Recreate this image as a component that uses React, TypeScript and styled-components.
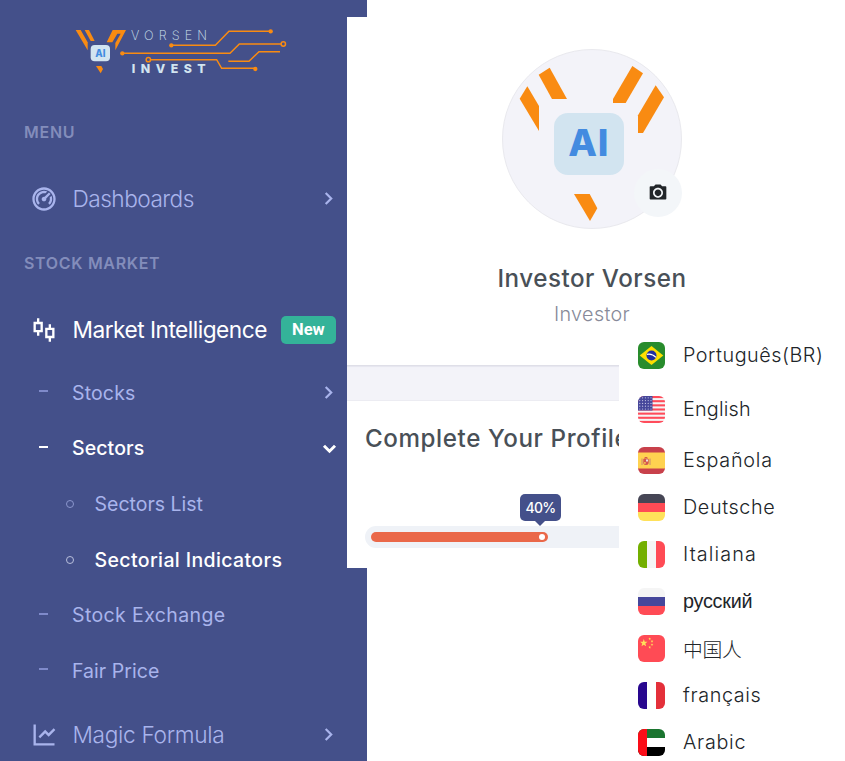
import React from "react";
import styled, { createGlobalStyle } from "styled-components";
import {
  RiDashboard2Line,
  RiStockLine,
  RiLineChartLine,
  RiCameraFill,
} from "react-icons/ri";

const NAVY = "#44508a";
const LILAC = "#a9b4ec";
const ORANGE = "#f98b12";

const GlobalStyle = createGlobalStyle`
  * { box-sizing: border-box; }
  body {
    margin: 0;
    background: #fff;
    font-family: Inter, "Liberation Sans", sans-serif;
    overflow: hidden;
  }
`;

const Page = styled.div`
  position: relative;
  display: flex;
  align-items: flex-start;
  width: 845px;
  height: 761px;
  overflow: hidden;
  background: #fff;
`;

/* ---------- Sidebar ---------- */

const Sidebar = styled.nav`
  flex: none;
  width: 367px;
  height: 761px;
  background: ${NAVY};
`;

const Brand = styled.div`
  height: 99px;
  padding: 15px 0 0 60px;
`;

const SectionTitle = styled.div<{ $height: number; $spacing: number }>`
  display: flex;
  align-items: center;
  height: ${(p) => p.$height}px;
  padding-left: 24px;
  font-size: 16px;
  font-weight: 600;
  letter-spacing: ${(p) => p.$spacing}px;
  color: #838dbb;
`;

const MenuRow = styled.div<{ $height: number; $active?: boolean }>`
  display: flex;
  align-items: center;
  height: ${(p) => p.$height}px;
  padding: 0 26px 0 29.5px;
  color: ${(p) => (p.$active ? "#fff" : LILAC)};
`;

const MenuIcon = styled.span`
  display: flex;
  width: 43px;
`;

const MenuLabel = styled.span<{ $spacing: number; $weight: number }>`
  font-size: 22.7px;
  font-weight: ${(p) => p.$weight};
  letter-spacing: ${(p) => p.$spacing}px;
  white-space: nowrap;
`;

const ArrowIcon = styled.svg<{ $open?: boolean }>`
  flex: none;
  width: 25px;
  height: 25px;
  margin-left: auto;
  fill: none;
  stroke: currentColor;
  stroke-width: ${(p) => (p.$open ? 2.8 : 2.1)};
  transform: ${(p) => (p.$open ? "translateX(1px) rotate(90deg)" : "none")};
`;

const NewBadge = styled.span`
  display: flex;
  align-items: center;
  justify-content: center;
  width: 55px;
  height: 28px;
  margin-left: 14px;
  border-radius: 5px;
  background: #34b399;
  color: #fff;
  font-family: Roboto, sans-serif;
  font-size: 16.5px;
  font-weight: 700;
`;

const SubList = styled.div`
  display: flex;
  flex-direction: column;
`;

const SubRow = styled.div<{ $nested?: boolean; $active?: boolean }>`
  display: flex;
  align-items: center;
  height: 55.6px;
  padding: 0 26px 0 ${(p) => (p.$nested ? 66 : 39)}px;
  color: ${(p) => (p.$active ? "#fff" : LILAC)};
`;

const Dash = styled.span<{ $bright?: boolean }>`
  width: 9px;
  height: 2px;
  margin: -3px 24px 0 0;
  background: ${(p) => (p.$bright ? "#fff" : "#7f8aca")};
`;

const Ring = styled.span<{ $bright?: boolean }>`
  width: 8px;
  height: 8px;
  margin: 0 20.5px 0 0;
  border: 1px solid ${(p) => (p.$bright ? "#b9bfdc" : "#8b96cd")};
  border-radius: 50%;
`;

const SubLabel = styled.span<{ $spacing: number; $weight?: number }>`
  font-size: 19.5px;
  font-weight: ${(p) => p.$weight ?? 400};
  letter-spacing: ${(p) => p.$spacing}px;
  white-space: nowrap;
`;

/* ---------- Profile panel ---------- */

const Panel = styled.main`
  flex: none;
  z-index: 1;
  width: 490px;
  height: 551px;
  margin: 17px 0 0 -20px;
  background: #fff;
`;

const ProfileCard = styled.section`
  display: flex;
  flex-direction: column;
  align-items: center;
  height: 348px;
  padding-top: 32px;
`;

const AvatarFrame = styled.div`
  position: relative;
  width: 180px;
  height: 180px;
  border: 1px solid #e9e9ee;
  border-radius: 50%;
  background: #f3f3f9;
`;

const AvatarArt = styled.svg`
  display: block;
  margin: -1px;
`;

const CameraButton = styled.button`
  position: absolute;
  right: -1px;
  bottom: 11px;
  display: flex;
  align-items: center;
  justify-content: center;
  width: 48px;
  height: 48px;
  padding: 0 0 2px;
  border: 0;
  border-radius: 50%;
  background: #f3f6f9;
  color: #212529;
`;

const Name = styled.h1`
  margin: 35px 0 0;
  font-size: 24.2px;
  line-height: 30px;
  font-weight: 450;
  letter-spacing: 0.5px;
  color: #495057;
`;

const Role = styled.p`
  margin: 7px 0 0;
  font-size: 19.8px;
  line-height: 26px;
  font-weight: 350;
  letter-spacing: 0.35px;
  color: #878a99;
`;

const Gap = styled.div`
  height: 36px;
  border-top: 1px solid #dfdfe8;
  border-bottom: 1px solid #ececf2;
  background: #f3f3f9;
  box-shadow: inset 0 2px 1px -1px #e6e6ef;
`;

const ProgressCard = styled.section`
  padding: 23px 0 0 18px;
`;

const CardTitle = styled.h2`
  margin: 0;
  font-size: 24.2px;
  line-height: 30px;
  font-weight: 450;
  letter-spacing: 0.58px;
  white-space: nowrap;
  color: #495057;
`;

const Track = styled.div`
  position: relative;
  height: 22px;
  margin-top: 72px;
  padding: 6px;
  border-radius: 11px;
  background: #eff2f7;
`;

const Fill = styled.div`
  display: flex;
  align-items: center;
  justify-content: flex-end;
  width: 177px;
  height: 10px;
  padding-right: 3px;
  border-radius: 5px;
  background: #ea6849;
`;

const Knob = styled.span`
  width: 6px;
  height: 6px;
  border-radius: 50%;
  background: #fff;
`;

const Tip = styled.span`
  position: absolute;
  left: 155px;
  bottom: 27px;
  display: flex;
  align-items: center;
  justify-content: center;
  width: 41px;
  height: 27px;
  border-radius: 5px;
  background: ${NAVY};
  color: #fff;
  font-size: 14px;
  font-weight: 500;
  letter-spacing: -0.7px;

  &::after {
    content: "";
    position: absolute;
    top: 27px;
    left: 15px;
    border: 5px solid transparent;
    border-top-color: ${NAVY};
    border-bottom: 0;
  }
`;

/* ---------- Language menu ---------- */

const LanguageMenu = styled.ul`
  position: absolute;
  z-index: 2;
  left: 619px;
  top: 330px;
  width: 226px;
  height: 431px;
  margin: 0;
  padding: 12px 0 0 19px;
  list-style: none;
  background: #fff;
`;

const Language = styled.li<{ $gap: number }>`
  display: flex;
  align-items: center;
  height: 27px;
  margin-bottom: ${(p) => p.$gap}px;
`;

const Flag = styled.svg`
  flex: none;
  width: 27px;
  height: 27px;
  margin-right: 18px;
  border-radius: 6px;
`;

const LanguageName = styled.span<{ $spacing: number; $font?: string }>`
  font-family: ${(p) => p.$font ?? "Inter"}, sans-serif;
  font-size: 19.8px;
  line-height: 27px;
  font-weight: 300;
  letter-spacing: ${(p) => p.$spacing}px;
  white-space: nowrap;
  color: #212529;
`;

function Arrow({ open }: { open?: boolean }) {
  return (
    <ArrowIcon viewBox="0 0 24 24" $open={open}>
      <path d="M9.300 6.700L14.600 12L9.300 17.300" />
    </ArrowIcon>
  );
}

function Logo() {
  return (
    <svg width="240" height="70" viewBox="0 0 720 210" fill="none">
      <g fill={ORANGE}>
        <path d="M47 45H62L83 82V106Z" />
        <path d="M74 45H87L104 78H92Z" />
        <path d="M158 45H198L166 106V84L182 56H172L157 82H140Z" />
        <path d="M108 153H124L129 162L122 175Z" />
      </g>
      <rect x="92" y="90" width="58" height="49" rx="12" fill="#d2e4f0" />
      <text x="121" y="125" textAnchor="middle" fontSize="29" fontWeight="800" fill="#438be0">
        AI
      </text>
      <text x="213" y="75" fontSize="38" fontWeight="200" textLength="228" fill="#d2e4f0">
        VORSEN
      </text>
      <text x="215" y="175" fontSize="37" fontWeight="800" textLength="222" fill="#d2e4f0">
        INVEST
      </text>
      <g stroke={ORANGE} strokeWidth="4.500">
        <path d="M334 91H466L507 49H632" />
        <path d="M187 115H510L538 87H663" />
        <path d="M272 134H470L485 160H586" />
        <path d="M505 139H567L597 110H660" />
        <circle cx="265" cy="134" r="6.500" />
        <circle cx="670" cy="87" r="6.500" />
      </g>
      <g fill={ORANGE}>
        <circle cx="334" cy="91" r="6.500" />
        <circle cx="632" cy="49" r="6.500" />
        <circle cx="187" cy="115" r="6.500" />
        <circle cx="586" cy="162" r="6.500" />
      </g>
    </svg>
  );
}

function Avatar() {
  return (
    <AvatarFrame>
      <AvatarArt width="180" height="180" viewBox="36 27 540 540">
        <g fill={ORANGE}>
          <path d="M112 139L147 198V273L89 176Z" />
          <path d="M146 104L179 83L231 177H186Z" />
          <path d="M427 78L459 100L407 189H369V177Z" />
          <path d="M497 136L522 172L459 279H444V226Z" />
          <path d="M252 462H299L322 505L300 543Z" />
        </g>
        <rect x="192" y="219" width="210" height="186" rx="42" fill="#d2e4f0" />
        <text x="235" y="349" fontSize="112" fontWeight="850" textLength="120" fill="#438be0">
          AI
        </text>
      </AvatarArt>
      <CameraButton aria-label="Change photo">
        <RiCameraFill size={20} />
      </CameraButton>
    </AvatarFrame>
  );
}

const star = (cx: number, cy: number, r: number) =>
  Array.from({ length: 10 }, (_, i) => {
    const radius = i % 2 ? r * 0.42 : r;
    const angle = (Math.PI * i) / 5 - Math.PI / 2;
    return `${cx + radius * Math.cos(angle)},${cy + radius * Math.sin(angle)}`;
  }).join(" ");

function Bands({ colors, vertical }: { colors: string[]; vertical?: boolean }) {
  return (
    <>
      {colors.map((c, i) =>
        vertical ? (
          <rect key={i} x={i * 9} width="9" height="27" fill={c} />
        ) : (
          <rect key={i} y={i * 9} width="27" height="9" fill={c} />
        )
      )}
    </>
  );
}

const flags: Record<string, React.ReactNode> = {
  br: (
    <>
      <rect width="27" height="27" fill="#288c2c" />
      <path d="M13.5 4L25.3 13.5L13.5 23L1.7 13.5Z" fill="#fddf00" />
      <circle cx="13.5" cy="13.5" r="5" fill="#1f2fa0" />
      <path d="M9 12.3Q14 11.2 18 15.4" stroke="#fff" strokeWidth="1.2" fill="none" />
    </>
  ),
  us: (
    <>
      <rect width="27" height="27" fill="#f5f5f5" />
      {[0, 1, 2, 3, 4, 5, 6].map((i) => (
        <rect key={i} y={i * 4.15} width="27" height="2.08" fill="#ff4b5a" />
      ))}
      <rect width="14.5" height="14.5" fill="#46479b" />
      {[0, 1, 2, 3, 4].map((row) =>
        [0, 1, 2, 3, 4].map((col) => (
          <circle
            key={`${row}-${col}`}
            cx={1.8 + col * 2.8}
            cy={1.8 + row * 2.8}
            r="0.6"
            fill="#c9c9e6"
          />
        ))
      )}
    </>
  ),
  es: (
    <>
      <rect width="27" height="27" fill="#c8414b" />
      <rect y="5.5" width="27" height="16" fill="#ffd250" />
      <path d="M3.5 11.5h1v6.5h-1zM11.5 11.5h1v6.5h-1z" fill="#c98a70" />
      <path d="M5.3 12h5.4v3.5q0 2.5 -2.7 2.5t-2.7 -2.5z" fill="#d4554f" />
      <path d="M5.5 11.5q2.5 -3 5 0z" fill="#c8414b" />
      <rect x="8" y="12.5" width="2" height="2" fill="#efe3e0" />
      <rect x="6" y="15" width="1.8" height="1.8" fill="#f0b950" />
    </>
  ),
  de: <Bands colors={["#464655", "#ff4b55", "#ffe15a"]} />,
  it: <Bands vertical colors={["#73af00", "#f5f5f5", "#ff4b55"]} />,
  ru: <Bands colors={["#f5f5f5", "#46479b", "#ff4b55"]} />,
  cn: (
    <>
      <rect width="27" height="27" fill="#ff4b55" />
      <g fill="#ffe15a">
        <polygon points={star(5.8, 8, 3.9)} />
        <polygon points={star(11.7, 3.8, 1.4)} />
        <polygon points={star(14, 6.3, 1.4)} />
        <polygon points={star(14, 9.7, 1.4)} />
        <polygon points={star(11.7, 12.3, 1.4)} />
      </g>
    </>
  ),
  fr: <Bands vertical colors={["#28078f", "#ffffff", "#e4303a"]} />,
  ae: (
    <>
      <rect width="27" height="9" fill="#1b7530" />
      <rect y="9" width="27" height="9" fill="#fff" />
      <rect y="18" width="27" height="9" fill="#000" />
      <rect width="9" height="27" fill="#fb0d18" />
    </>
  ),
};

const languages = [
  { code: "br", name: "Português(BR)", gap: 27, spacing: 0.53 },
  { code: "us", name: "English", gap: 24, spacing: 0.2 },
  { code: "es", name: "Española", gap: 20, spacing: 0.75 },
  { code: "de", name: "Deutsche", gap: 20, spacing: 0.6 },
  { code: "it", name: "Italiana", gap: 20, spacing: 1.1 },
  { code: "ru", name: "русский", gap: 20, spacing: -0.25, font: '"Liberation Sans"' },
  { code: "cn", name: "中国人", gap: 20, spacing: -0.3, font: '"Noto Sans CJK SC"' },
  { code: "fr", name: "français", gap: 20, spacing: 0.63 },
  { code: "ae", name: "Arabic", gap: 0, spacing: 0.73 },
];

export default function App() {
  return (
    <Page>
      <GlobalStyle />
      <Sidebar>
        <Brand>
          <Logo />
        </Brand>
        <SectionTitle $height={66} $spacing={0.75}>MENU</SectionTitle>
        <MenuRow $height={67}>
          <MenuIcon><RiDashboard2Line size={28} /></MenuIcon>
          <MenuLabel $spacing={-0.55} $weight={300}>Dashboards</MenuLabel>
          <Arrow />
        </MenuRow>
        <SectionTitle $height={62} $spacing={0.68}>STOCK MARKET</SectionTitle>
        <MenuRow $height={71} $active>
          <MenuIcon><RiStockLine size={28} /></MenuIcon>
          <MenuLabel $spacing={-0.52} $weight={400}>Market Intelligence</MenuLabel>
          <NewBadge>New</NewBadge>
        </MenuRow>
        <SubList>
          <SubRow>
            <Dash />
            <SubLabel $spacing={0.15}>Stocks</SubLabel>
            <Arrow />
          </SubRow>
          <SubRow $active>
            <Dash $bright />
            <SubLabel $spacing={0.1} $weight={500}>Sectors</SubLabel>
            <Arrow open />
          </SubRow>
          <SubRow $nested>
            <Ring />
            <SubLabel $spacing={0}>Sectors List</SubLabel>
          </SubRow>
          <SubRow $nested $active>
            <Ring $bright />
            <SubLabel $spacing={0.38} $weight={500}>Sectorial Indicators</SubLabel>
          </SubRow>
          <SubRow>
            <Dash />
            <SubLabel $spacing={0.39}>Stock Exchange</SubLabel>
          </SubRow>
          <SubRow>
            <Dash />
            <SubLabel $spacing={0.05}>Fair Price</SubLabel>
          </SubRow>
        </SubList>
        <MenuRow $height={72}>
          <MenuIcon><RiLineChartLine size={28} /></MenuIcon>
          <MenuLabel $spacing={-0.33} $weight={300}>Magic Formula</MenuLabel>
          <Arrow />
        </MenuRow>
      </Sidebar>

      <Panel>
        <ProfileCard>
          <Avatar />
          <Name>Investor Vorsen</Name>
          <Role>Investor</Role>
        </ProfileCard>
        <Gap />
        <ProgressCard>
          <CardTitle>Complete Your Profile</CardTitle>
          <Track>
            <Fill>
              <Knob />
            </Fill>
            <Tip>40%</Tip>
          </Track>
        </ProgressCard>
      </Panel>

      <LanguageMenu>
        {languages.map((l) => (
          <Language key={l.code} $gap={l.gap}>
            <Flag viewBox="0 0 27 27">{flags[l.code]}</Flag>
            <LanguageName $spacing={l.spacing} $font={l.font}>{l.name}</LanguageName>
          </Language>
        ))}
      </LanguageMenu>
    </Page>
  );
}
